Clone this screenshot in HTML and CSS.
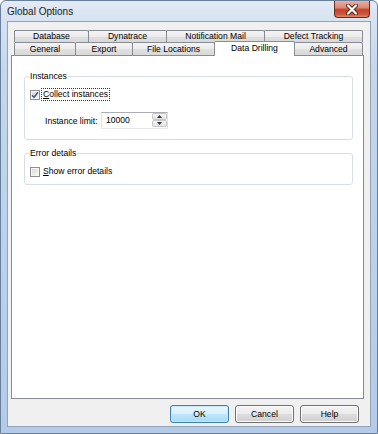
FILE: index.html
```html
<!DOCTYPE html>
<html>
<head>
<meta charset="utf-8">
<title>Global Options</title>
<link rel="stylesheet" href="styles.css">
</head>
<body>
<div class="window">
  <div class="titlebar">
    <span class="title">Global Options</span>
    <span class="close">
      <svg width="14" height="11" viewBox="0 0 14 11">
        <path d="M3 1.5 L11 9.5 M11 1.5 L3 9.5" stroke="#5b2418" stroke-width="4" stroke-linecap="round"/>
        <path d="M3 1.5 L11 9.5 M11 1.5 L3 9.5" stroke="#ffffff" stroke-width="2.2" stroke-linecap="round"/>
      </svg>
    </span>
  </div>
  <div class="client">
    <div class="tabs">
      <div class="tabrow row-top">
        <div class="tab w-db">Database</div>
        <div class="tab w-dyn">Dynatrace</div>
        <div class="tab w-nm">Notification Mail</div>
        <div class="tab w-dt">Defect Tracking</div>
      </div>
      <div class="tabrow row-bottom">
        <div class="tab w-gen">General</div>
        <div class="tab w-exp">Export</div>
        <div class="tab w-fl">File Locations</div>
        <div class="tab w-dd sel">Data Drilling</div>
        <div class="tab w-adv">Advanced</div>
      </div>
    </div>
    <div class="panel">
      <fieldset class="group g1">
        <legend>Instances</legend>
        <div class="crow first">
          <span class="cb">
            <svg width="8" height="8" viewBox="0 0 8 8"><path d="M1 4.2 L3 6.3 L7 1.2" stroke="#3e5a8a" stroke-width="1.6" fill="none"/></svg>
          </span>
          <span class="ctext focus"><u>C</u>ollect instances</span>
        </div>
        <div class="lrow">
          <span class="lbl">Instance limit:</span>
          <div class="spin">
            <span class="val">10000</span>
            <div class="arrows">
              <span class="arr">
                <svg width="5" height="3" viewBox="0 0 5 3"><path d="M0 3 L2.5 0 L5 3 Z" fill="#333"/></svg>
              </span>
              <span class="arr">
                <svg width="5" height="3" viewBox="0 0 5 3"><path d="M0 0 L2.5 3 L5 0 Z" fill="#333"/></svg>
              </span>
            </div>
          </div>
        </div>
      </fieldset>
      <fieldset class="group g2">
        <legend>Error details</legend>
        <div class="crow">
          <span class="cb"></span>
          <span class="ctext"><u>S</u>how error details</span>
        </div>
      </fieldset>
    </div>
    <div class="buttons">
      <button class="btn default">OK</button>
      <button class="btn">Cancel</button>
      <button class="btn">Help</button>
    </div>
  </div>
</div>
</body>
</html>
```

FILE: styles.css
```css
html, body {
  margin: 0;
  padding: 0;
  background: #ffffff;
}

body {
  font-family: "Liberation Sans", Arial, sans-serif;
  font-size: 8.6px;
  color: #000;
}

.window {
  width: 378px;
  height: 434px;
  box-sizing: border-box;
  border: 1px solid #6a7f9c;
  border-radius: 6px 6px 0 0;
  background: linear-gradient(180deg, #e3ebf5 0px, #d6e2f1 20px, #c3d7ee 70px, #b3cbe9 100%);
  display: flex;
  flex-direction: column;
  overflow: hidden;
}

.titlebar {
  height: 20px;
  display: flex;
  justify-content: space-between;
  align-items: flex-start;
  flex: none;
}

.title {
  font-family: "Liberation Sans", Arial, sans-serif;
  font-size: 10px;
  line-height: 20px;
  padding: 1px 0 0 6px;
  color: #1a1a1a;
}

.close {
  width: 36px;
  height: 17px;
  margin-right: 7px;
  box-sizing: border-box;
  border: 1px solid #6b2c20;
  border-top: none;
  border-radius: 0 0 4px 4px;
  background: linear-gradient(180deg, #eab0a4 0%, #dc8a78 40%, #c4412a 55%, #cd5a3e 85%, #e08c6c 100%);
  display: flex;
  align-items: center;
  justify-content: center;
}

.client {
  flex: 1;
  margin: 0 6px 6px 6px;
  border: 1px solid #93a2b5;
  background: #f0f0f0;
  display: flex;
  flex-direction: column;
  padding: 8px 6px 0 3px;
}

.tabs {
  margin-left: 3px;
  width: 349px;
}

.tabrow {
  display: flex;
}

.row-top {
  height: 12px;
}

.row-bottom {
  height: 13px;
}

.tab {
  box-sizing: border-box;
  border: 1px solid #898c95;
  border-bottom: none;
  border-radius: 2px 2px 0 0;
  background: linear-gradient(180deg, #f4f4f4 0%, #ebebeb 50%, #dfdfdf 51%, #d9d9d9 100%);
  text-align: center;
  margin-left: -1px;
  white-space: nowrap;
}

.tabrow .tab:first-child {
  margin-left: 0;
}

.row-top .tab {
  height: 12px;
  line-height: 11px;
}

.row-bottom .tab {
  height: 13px;
  line-height: 12px;
}

.row-bottom .tab.sel {
  height: 15px;
  margin-top: -1px;
  line-height: 12px;
  background: #ffffff;
  position: relative;
  z-index: 1;
}

.w-db { width: 75px; }
.w-dyn { width: 79px; }
.w-nm { width: 99px; }
.w-dt { width: 99px; }
.w-gen { width: 62px; }
.w-exp { width: 58px; }
.w-fl { width: 83px; }
.w-dd { width: 81px; }
.w-adv { width: 69px; }

.panel {
  width: 353px;
  height: 344px;
  box-sizing: border-box;
  border: 1px solid #898c95;
  background: #ffffff;
  padding: 14px 10px 0 12px;
  flex: none;
}

.group {
  margin: 0;
  border: 1px solid #d5dfe5;
  border-radius: 3px;
  padding: 0 5px 10px 5px;
  min-inline-size: 0;
}

.group legend {
  padding: 0 1px;
  margin-left: -1px;
  line-height: 12px;
  color: #000;
}

.g2 {
  margin-top: 7px;
  padding-bottom: 6px;
}

.crow {
  display: flex;
  align-items: center;
  height: 13px;
  margin-top: 6px;
}

.cb {
  width: 10px;
  height: 10px;
  box-sizing: border-box;
  border: 1px solid #8e8f8f;
  background: linear-gradient(135deg, #d6d6d6 0%, #ececec 60%, #fbfbfb 100%);
  box-shadow: inset 0 0 0 1px #f6f6f6;
  display: flex;
  align-items: center;
  justify-content: center;
  margin-right: 1px;
  flex: none;
}

.ctext {
  border: 1px dotted transparent;
  padding: 0 1px;
  line-height: 11px;
}

.ctext.focus {
  border-color: #333;
}

.lrow {
  display: flex;
  align-items: center;
  height: 17px;
  margin-top: 11px;
  padding-left: 15px;
}

.lbl {
  width: 56px;
  flex: none;
}

.spin {
  width: 67px;
  height: 17px;
  box-sizing: border-box;
  border: 1px solid #abadb3;
  border-left-color: #e2e3ea;
  border-right-color: #dbdfe6;
  border-bottom-color: #e3e9ef;
  background: #fff;
  display: flex;
  align-items: stretch;
}

.val {
  flex: 1;
  padding-left: 4px;
  line-height: 14px;
}

.arrows {
  width: 15px;
  display: flex;
  flex-direction: column;
  padding: 0 0 1px 0;
}

.arr {
  flex: 1;
  box-sizing: border-box;
  border: 1px solid #c4c6cb;
  border-radius: 2px;
  background: linear-gradient(180deg, #f6f6f6 0%, #e4e4e4 100%);
  display: flex;
  align-items: center;
  justify-content: center;
}

.buttons {
  display: flex;
  justify-content: flex-end;
  gap: 6px;
  padding: 6px 5px 0 0;
}

.btn {
  width: 59px;
  height: 18px;
  box-sizing: border-box;
  border: 1px solid #707070;
  border-radius: 3px;
  background: linear-gradient(180deg, #f3f3f3 0%, #ebebeb 48%, #dddddd 52%, #cfcfcf 100%);
  box-shadow: inset 0 0 0 1px #fcfcfc;
  font-family: "Liberation Sans", Arial, sans-serif;
  font-size: 8.6px;
  color: #000;
  padding: 0;
  margin: 0;
}

.btn.default {
  border-color: #3c7fb1;
  background: linear-gradient(180deg, #eaf6fd 0%, #d9f0fc 48%, #bee6fd 52%, #a7d9f5 100%);
  box-shadow: inset 0 0 0 1px #c8e8fa;
}
```
